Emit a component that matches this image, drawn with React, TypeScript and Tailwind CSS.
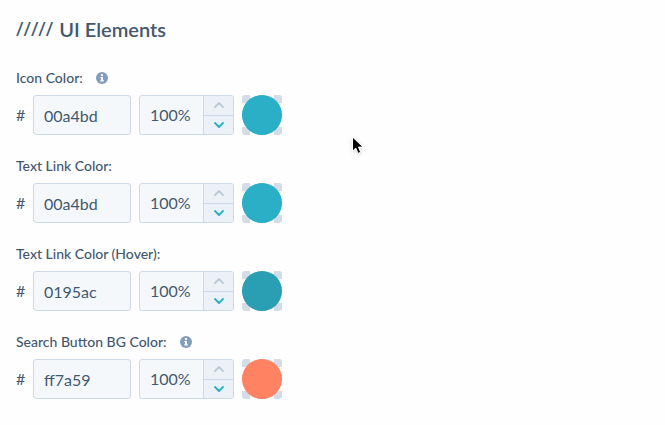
import React, {ChangeEvent, useState} from 'react';

type ColorFieldPropsType = {
    id: string
    label: string
    initialColor: string
    swatchClass: string
    hasInfo?: boolean
}

const InfoIcon: React.FC = () => (
    <svg viewBox="0 0 12 12" className="size-3" aria-hidden="true">
        <circle cx="6" cy="6" r="6" fill="#829dbb"/>
        <circle cx="6" cy="3.1" r="1.2" fill="#fff"/>
        <path d="M4.4 5h2.6v3.3h.8v1.3H4.3V8.3h.8V6.2h-.7z" fill="#fff"/>
    </svg>
)

const Chevron: React.FC<{d: string}> = ({d}) => (
    <svg viewBox="0 0 10 6" className="h-1.5 w-2.5" fill="none" stroke="currentColor" strokeWidth="1.8"
         strokeLinecap="round" strokeLinejoin="round" aria-hidden="true">
        <path d={d}/>
    </svg>
)

const ColorField: React.FC<ColorFieldPropsType> = ({id, label, initialColor, swatchClass, hasInfo}) => {
    const [color, setColor] = useState(initialColor)
    const [opacity, setOpacity] = useState(100)

    const onOpacityChange = (e: ChangeEvent<HTMLInputElement>) => {
        const value = parseInt(e.target.value) || 0
        setOpacity(Math.min(100, Math.max(0, value)))
    }

    return (
        <div>
            <div className="flex h-5 items-center gap-[13px]">
                <label htmlFor={id} className="text-[14px] leading-5 font-medium">{label}</label>
                {hasInfo && (
                    <button type="button" aria-label={'About ' + label}>
                        <InfoIcon/>
                    </button>
                )}
            </div>
            <div className="mt-[7px] flex items-center gap-2">
                <span className="w-[9px] text-[16px] leading-6">#</span>
                <input id={id} type="text" value={color} onChange={e => setColor(e.target.value)}
                       className="h-10 w-[98px] rounded-[3px] border border-[#cbd9e8] bg-[#f5f8fb] px-2.5 text-[16px] outline-none"/>
                <div className="flex h-10 w-[95px] overflow-hidden rounded-[3px] border border-[#cbd9e8] bg-[#f5f8fb]">
                    <input type="text" aria-label={label + ' opacity'} value={opacity + '%'} onChange={onOpacityChange}
                           className="min-w-0 flex-1 pl-2.5 text-[16px] outline-none"/>
                    <div className="flex w-[30px] flex-col border-l border-[#cbd9e8] bg-[#ecf1f7]">
                        <button type="button" aria-label="Increase" onClick={() => setOpacity(Math.min(100, opacity + 1))}
                                className="flex flex-1 items-center justify-center border-b border-[#cbd9e8] text-[#bcc9d6]">
                            <Chevron d="M1 5l4-4 4 4"/>
                        </button>
                        <button type="button" aria-label="Decrease" onClick={() => setOpacity(Math.max(0, opacity - 1))}
                                className="flex flex-1 items-center justify-center text-[#27b0c6]">
                            <Chevron d="M1 1l4 4 4-4"/>
                        </button>
                    </div>
                </div>
                <button type="button" aria-label={'Pick ' + label}
                        className="size-10 rounded-[3px] bg-[conic-gradient(#d3dce7_25%,#fff_0_50%,#d3dce7_0_75%,#fff_0)] bg-[size:16px_16px] bg-[position:-8px_0px]">
                    <span className={'block size-10 rounded-full ' + swatchClass}/>
                </button>
            </div>
        </div>
    )
}

const App: React.FC = () => {
    return (
        <main className="min-h-screen bg-[#fefefe] px-4 pt-[15px] pb-6 font-[Lato,'Open_Sans',sans-serif] text-[#43586f]">
            <h1 className="flex gap-1.5 text-[20px] leading-7 font-semibold">
                <span className="font-['Noto_Sans',sans-serif] font-normal">/////</span>
                <span>UI Elements</span>
            </h1>
            <form className="mt-[25px] flex flex-col gap-[21px]">
                <ColorField id="icon-color" label="Icon Color:" initialColor="00a4bd" swatchClass="bg-[#2aafc6]" hasInfo/>
                <ColorField id="link-color" label="Text Link Color:" initialColor="00a4bd" swatchClass="bg-[#2aafc6]"/>
                <ColorField id="link-hover-color" label="Text Link Color (Hover):" initialColor="0195ac"
                            swatchClass="bg-[#2a9fb3]"/>
                <ColorField id="button-color" label="Search Button BG Color:" initialColor="ff7a59"
                            swatchClass="bg-[#ff8262]" hasInfo/>
            </form>
            {/* mouse pointer floating over the panel */}
            <svg viewBox="0 0 12 19" className="pointer-events-none absolute top-[136px] left-[352px] h-[19px] w-3 drop-shadow-sm"
                 aria-hidden="true">
                <path d="M.5 1v14.2l3.3-3.1 2.2 5.3 2.7-1.1-2.2-5.2h4.6z" fill="#000" stroke="#fff" strokeWidth="1"/>
            </svg>
        </main>
    )
}

export default App;
